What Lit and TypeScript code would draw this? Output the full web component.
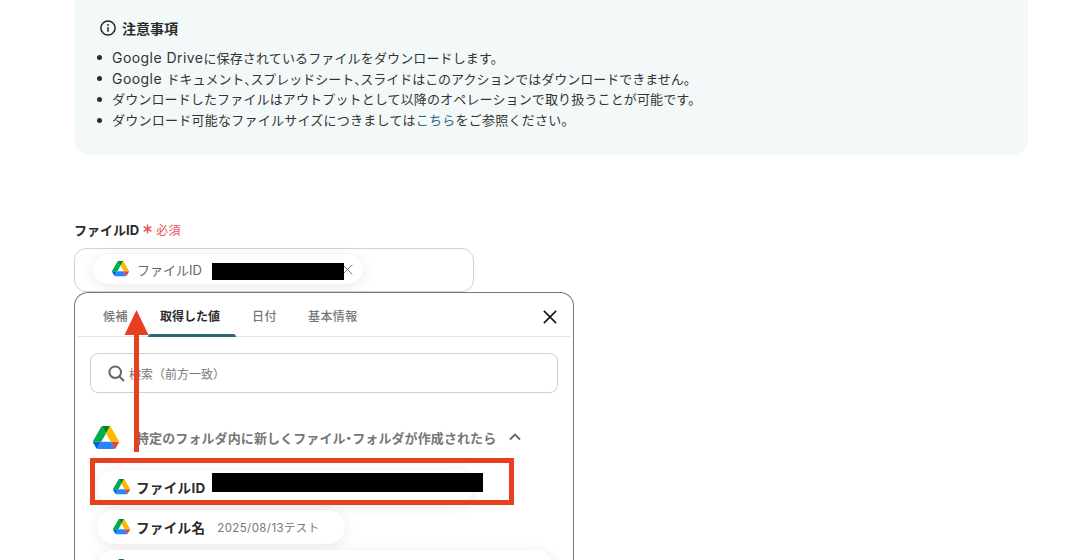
import { LitElement, html, css } from "lit";
import { customElement } from "lit/decorators.js";

const drive = (width: number) => html`<svg class="drive" width=${width} height=${(width * 78) / 87.3} viewBox="0 0 87.3 78">
  <path d="m6.6 66.85 3.85 6.65c.8 1.4 1.95 2.5 3.3 3.3l13.75-23.8h-27.5c0 1.55.4 3.1 1.2 4.5z" fill="#0066da"/>
  <path d="m43.65 25-13.75-23.8c-1.35.8-2.5 1.9-3.3 3.3l-25.4 44a9.06 9.06 0 0 0 -1.2 4.5h27.5z" fill="#00ac47"/>
  <path d="m73.55 76.8c1.35-.8 2.5-1.9 3.3-3.3l1.6-2.75 7.65-13.25c.8-1.4 1.2-2.95 1.2-4.5h-27.502l5.852 11.5z" fill="#ea4335"/>
  <path d="m43.65 25 13.75-23.8c-1.35-.8-2.9-1.2-4.5-1.2h-18.5c-1.6 0-3.15.45-4.5 1.2z" fill="#00832d"/>
  <path d="m59.8 53h-32.3l-13.75 23.8c1.35.8 2.9 1.2 4.5 1.2h50.8c1.6 0 3.15-.45 4.5-1.2z" fill="#2684fc"/>
  <path d="m73.4 26.5-12.7-22c-.8-1.4-1.95-2.5-3.3-3.3l-13.75 23.8 16.15 28h27.45c0-1.55-.4-3.1-1.2-4.5z" fill="#ffba00"/>
</svg>`;

const closeIcon = (size: number, stroke: string, w: number) => html`<svg width=${size} height=${size} viewBox="0 0 16 16" fill="none" stroke=${stroke} stroke-width=${w}><path d="M1 1 15 15M15 1 1 15"/></svg>`;

@customElement("app-root")
export class AppRoot extends LitElement {
  static styles = css`
    :host { display: block; width: 1070px; height: 560px; overflow: hidden; position: relative; background: #fff;
      font-family: Inter, "Noto Sans CJK JP", sans-serif; color: #2b2b2b; }
    .page { padding-left: 74px; display: flex; flex-direction: column; }
    .notice { width: 954px; height: 155px; box-sizing: border-box; background: #f3f9f8; border-radius: 0 0 16px 16px; padding: 18px 26px 0 26px; }
    .notice-head { display: flex; align-items: center; gap: 6px; font-size: 14px; font-weight: 700; height: 20px; color: #2b2b2b; }
    ul { margin: 9px 0 0; padding: 0 0 0 12px; font-size: 13px; line-height: 21px; color: #333; list-style: none; }
    li { position: relative; white-space: nowrap; height: 21px; letter-spacing: 0.14px; }
    li::before { content: ""; position: absolute; left: -15px; top: 8px; width: 5px; height: 5px; border-radius: 50%; background: #2b2b2b; }
    li.l2 { letter-spacing: -0.02px; }
    li.l4 { letter-spacing: 0.25px; }
    .lat { font-size: 14px; letter-spacing: 0.45px; }
    .p { letter-spacing: -7px; }
    .dot { font-feature-settings: "palt"; }
    a { color: #2d6a80; text-decoration: none; }
    .label { margin-top: 65px; display: flex; align-items: center; height: 18px; font-size: 13px; font-weight: 700; color: #2b2b2b; gap: 4px; }
    .req { color: #e8535c; font-weight: 400; font-size: 12px; display: flex; align-items: center; gap: 4px; letter-spacing: .4px; }
    .field { margin-top: 10px; width: 400px; height: 44px; box-sizing: border-box; border: 1px solid #cfd2d4; border-radius: 12px; padding: 5px 18px; }
    .chip { display: flex; align-items: center; background: #fff; border-radius: 15px; box-shadow: 0 2px 14px rgba(0,0,0,.09); }
    .field .chip { width: 270px; height: 30px; box-sizing: border-box; padding: 0 10px 0 19px; gap: 8px; font-size: 13px; color: #666; }
    .field .chip .x { margin-left: auto; display: flex; }
    .panel { width: 500px; height: 300px; box-sizing: border-box; border: 1px solid #77797b; border-bottom: none; border-radius: 14px 14px 0 0; background: #fff; padding: 0 3px; position: relative; }
    .tabs { display: flex; border-bottom: 1px solid #e2e3e4; align-items: stretch; position: relative; font-size: 12px; color: #777; font-weight: 500; padding-top: 1px; height: 42px; }
    .tab { display: flex; align-items: center; letter-spacing: .4px; box-sizing: border-box; }
    .tab.c1 { width: 70px; padding-left: 25px; }
    .tab.active { color: #2b2b2b; font-weight: 700; width: 88px; position: relative; letter-spacing: 0; padding-left: 12px; }
    .tab.active::after { content: ""; position: absolute; left: 0; right: 0; bottom: -1px; height: 3px; background: #2d6578; border-radius: 3px 3px 0 0; }
    .tab.c3 { width: 56px; padding-left: 16px; }
    .tab.c4 { width: 88px; padding-left: 16px; }
    .tabs .close { position: absolute; right: 13px; top: 17px; display: flex; }
    .search { margin: 16px 12px 0; width: 468px; height: 40px; box-sizing: border-box; border: 1px solid #cdcfd1; border-radius: 8px; display: flex; align-items: center; padding-left: 17px; gap: 4px; font-size: 12px; color: #777; }
    .group { margin: 30px 0 0 15px; height: 28px; display: flex; align-items: center; gap: 17px; font-size: 13px; font-weight: 700; color: #777; letter-spacing: .1px; }
    .group .drive { margin-top: 1px; }
    .group svg.chev { margin-left: -4px; }
    .rows { margin: 19px 0 0 19px; display: flex; flex-direction: column; gap: 6px; }
    .rows .chip { height: 34px; flex: none; box-sizing: border-box; padding: 0 16px; gap: 6px; font-size: 13.5px; font-weight: 700; color: #2b2b2b; letter-spacing: .35px; border-radius: 17px; }
    .rows .chip .val { margin-left: 6px; font-size: 11.5px; font-weight: 400; color: #777; letter-spacing: .4px; }
    .r1 { width: 376px; }
    .r2 { width: 248px; }
    .r3 { width: 456px; }
    .overlay { position: absolute; left: 0; top: 0; pointer-events: none; }
    .redact { position: absolute; background: #000; }
    .redact.a { left: 212px; top: 263px; width: 132px; height: 17px; }
    .redact.b { left: 212px; top: 473px; width: 271px; height: 19px; }
    .redbox { position: absolute; left: 90px; top: 458px; width: 424px; height: 47px; box-sizing: border-box; border: 5px solid #e83f20; }
  `;

  render() {
    return html`
      <div class="page">
        <section class="notice">
          <div class="notice-head">
            <svg width="16" height="16" viewBox="0 0 16 16" fill="none" stroke="#222" stroke-width="1.5"><circle cx="8" cy="8" r="7.1"/><path d="M8 7.200v4.600"/><path d="M8 4.100v1.600"/></svg>
            <span>注意事項</span>
          </div>
          <ul>
            <li><span class="lat">Google Drive</span>に保存されているファイルをダウンロードします。</li>
            <li class="l2"><span class="lat">Google </span>ドキュメント<span class="p">、</span>スプレッドシート<span class="p">、</span>スライドはこのアクションではダウンロードできません。</li>
            <li>ダウンロードしたファイルはアウトプットとして以降のオペレーションで取り扱うことが可能です。</li>
            <li class="l4">ダウンロード可能なファイルサイズにつきましては<a>こちら</a>をご参照ください。</li>
          </ul>
        </section>
        <div class="label"><span>ファイルID</span><span class="req">
          <svg width="9" height="10" viewBox="0 0 9 10" fill="none" stroke="#e8535c" stroke-width="1.500"><path d="M4.500 .500v9M.6 2.700l7.800 4.600M8.400 2.700.6 7.300"/></svg>
          <span>必須</span></span></div>
        <div class="field">
          <div class="chip">${drive(17)}<span>ファイルID</span><span class="x">${closeIcon(11, "#777", 1.4)}</span></div>
        </div>
        <div class="panel">
          <div class="tabs">
            <div class="tab c1">候補</div>
            <div class="tab active">取得した値</div>
            <div class="tab c3">日付</div>
            <div class="tab c4">基本情報</div>
            <span class="close">${closeIcon(14, "#111", 1.7)}</span>
          </div>
          <div class="search">
            <svg width="17" height="17" viewBox="0 0 17 17" fill="none" stroke="#666" stroke-width="2"><circle cx="7.200" cy="7.200" r="5.800"/><path d="m11.500 11.500 4.500 4.500"/></svg>
            <span>検索（前方一致）</span>
          </div>
          <div class="group">${drive(26)}<span>特定のフォルダ内に新しくファイル<span class="dot">・</span>フォルダが作成されたら</span>
            <svg class="chev" width="12" height="8" viewBox="0 0 12 8" fill="none" stroke="#666" stroke-width="1.800"><path d="m1 6.500 5-5 5 5"/></svg></div>
          <div class="rows">
            <div class="chip r1">${drive(17)}<span>ファイルID</span></div>
            <div class="chip r2">${drive(17)}<span>ファイル名</span><span class="val">2025/08/13テスト</span></div>
            <div class="chip r3">${drive(17)}</div>
          </div>
        </div>
      </div>
      <svg class="overlay" width="1070" height="560"><path d="M134 452V332h5v120z" fill="#e83f20"/><path d="M124.500 335 136.500 310 148.500 335z" fill="#e83f20"/></svg>
      <div class="redact a"></div>
      <div class="redact b"></div>
      <div class="redbox"></div>
    `;
  }
}
